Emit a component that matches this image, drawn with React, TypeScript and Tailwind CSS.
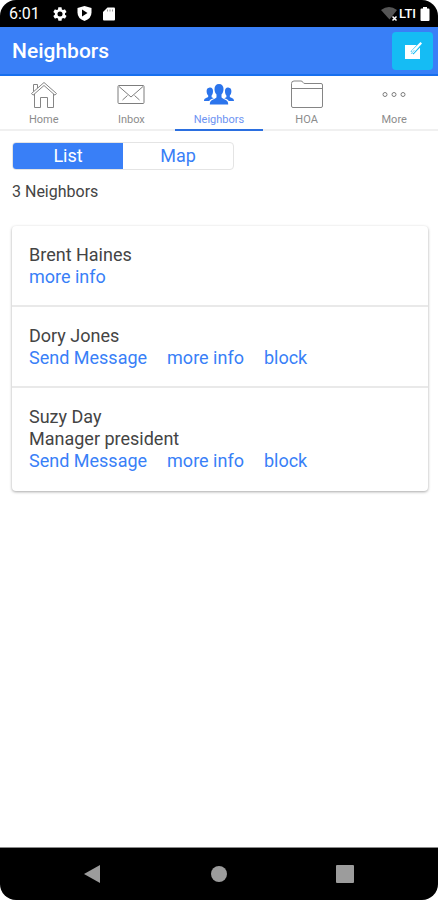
import type { ReactNode } from "react";
import clsx from "clsx";

const tabs = [
  { label: "Home", icon: <HomeIcon /> },
  { label: "Inbox", icon: <InboxIcon /> },
  { label: "Neighbors", icon: <PeopleIcon />, active: true },
  { label: "HOA", icon: <FolderIcon /> },
  { label: "More", icon: <MoreIcon /> },
];

const neighbors = [
  { name: "Brent Haines", actions: ["more info"] },
  { name: "Dory Jones", actions: ["Send Message", "more info", "block"] },
  { name: "Suzy Day", role: "Manager president", actions: ["Send Message", "more info", "block"] },
];

function HomeIcon() {
  return (
    <svg width="28" height="30" viewBox="0 0 28 30" fill="none" stroke="#858585" strokeWidth="1">
      <path d="M1.500 13.500 14 2.500l12.500 11-1.500 1.700L14 5.500 3 15.200z" />
      <path d="M3.500 11.500V4.500h4v3.500" />
      <path d="M4.500 14v13.500h6v-10h7v10h6V14" />
    </svg>
  );
}

function InboxIcon() {
  return (
    <svg width="28" height="30" viewBox="0 0 28 30" fill="none" stroke="#7d7d7d" strokeWidth="1">
      <rect x="1" y="5.500" width="26" height="18" rx="1" />
      <path d="M2 6.500 14 17 26 6.500M5.500 20l5-4.500M22.500 20l-5-4.500" />
    </svg>
  );
}

function PeopleIcon() {
  return (
    <svg width="32" height="30" viewBox="0 0 32 30" fill="#2b74ec">
      <path d="M16 4c3 0 4.500 2 4.500 5 0 2.500-.8 4.400-2 5.600v2.600c.6 1.500 5 2 6.200 4.600.4 1 .5 1.800.5 2.700H6.800c0-.9.1-1.700.5-2.700 1.200-2.600 5.600-3.100 6.200-4.600v-2.600c-1.200-1.200-2-3.100-2-5.600 0-3 1.500-5 4.500-5z" />
      <path d="M6.700 7.500c2-.3 3.300 1.100 3.300 3.500 0 2-.5 3.600-1.400 4.500v1.700l2.200 1.100c-2 .6-3.700 1.300-4.600 2.700H1c0-3.300 3.400-2.700 4.200-4.200v-1.300C4.200 14.700 3.600 13 3.600 11c0-2 1-3.200 3.100-3.500z" />
      <path d="M25.300 7.500c-2-.3-3.300 1.100-3.300 3.500 0 2 .5 3.600 1.400 4.500v1.700l-2.200 1.100c2 .6 3.700 1.300 4.600 2.700H31c0-3.300-3.400-2.700-4.200-4.200v-1.300c1-.8 1.600-2.500 1.600-4.500 0-2-1-3.200-3.100-3.500z" />
    </svg>
  );
}

function FolderIcon() {
  return (
    <svg width="34" height="30" viewBox="0 0 34 30" fill="none" stroke="#858585" strokeWidth="1">
      <path d="M1.500 26V3.500q0-2.500 2.500-2.500h7q1.500 0 2 1.500.5 1 2 1h16q1.500 0 1.500 1.500v21q0 1.500-1.500 1.500H3q-1.500 0-1.500-1.500z" />
      <path d="M1.500 8.500h31" />
    </svg>
  );
}

function MoreIcon() {
  return (
    <svg width="26" height="30" viewBox="0 0 26 30" fill="none" stroke="#7d7d7d" strokeWidth="1">
      <circle cx="4" cy="14.500" r="2" />
      <circle cx="13" cy="14.500" r="2" />
      <circle cx="22" cy="14.500" r="2" />
    </svg>
  );
}

function StatusBar() {
  return (
    <div className="flex h-[27px] items-center rounded-t-2xl bg-black pr-2 pl-[9px] text-white">
      <span className="w-[43px] text-base leading-5">6:01</span>
      <div className="flex items-center gap-2">
        {/* settings */}
        <svg width="16" height="16" viewBox="0 0 24 24" fill="#fff">
          <path d="M19.400 13c.1-.3.100-.7.100-1s0-.7-.1-1l2.100-1.600c.2-.2.200-.4.100-.6l-2-3.500c-.1-.2-.4-.3-.6-.2l-2.500 1c-.5-.4-1.100-.7-1.700-1l-.4-2.600c0-.3-.2-.5-.5-.5h-4c-.2 0-.4.200-.5.400L9 5.100c-.6.200-1.200.6-1.700 1l-2.500-1c-.2-.1-.5 0-.6.200l-2 3.400c-.1.200-.1.500.1.700L4.400 11c0 .3-.1.700-.1 1s0 .7.100 1l-2.100 1.600c-.2.200-.2.400-.1.600l2 3.500c.1.200.4.300.6.200l2.500-1c.5.400 1.100.7 1.700 1l.4 2.600c0 .3.200.5.500.5h4c.2 0 .5-.2.500-.4l.4-2.700c.6-.2 1.200-.6 1.700-1l2.500 1c.2.100.5 0 .6-.2l2-3.400c.1-.2.100-.5-.1-.7zM12 15.800a3.800 3.800 0 1 1 0-7.600 3.800 3.800 0 0 1 0 7.600z" fillRule="evenodd" />
        </svg>
        {/* play protect */}
        <svg width="17" height="17" viewBox="0 0 17 17">
          <path d="M8.500 1 15.500 3v4.500q0 6-7 8.500-7-2.500-7-8.500V3z" fill="#fff" />
          <path d="M6 4.500v7l5.500-3.500z" fill="#000" />
        </svg>
        {/* sd card */}
        <svg width="16" height="16" viewBox="0 0 16 16">
          <path d="M6.500 1.500H13q1 0 1 1v11q0 1-1 1H3q-1 0-1-1V6z" fill="#fff" />
          <path d="M6.500 3.500v2M9 3.500v2M11.500 3.500v2" stroke="#999" />
        </svg>
      </div>
      <div className="ml-auto flex items-center">
        <svg width="18" height="16" viewBox="0 0 18 16">
          <path d="M0 4q8-6 16 0L8.500 13.500z" fill="#555" />
          <path d="M11.500 10.500l4 4M15.500 10.500l-4 4" stroke="#fff" strokeWidth="1.500" />
        </svg>
        <span className="mr-1 text-[13px] leading-5 font-medium">LTI</span>
        <svg width="10" height="16" viewBox="0 0 10 16" fill="#fff">
          <path d="M3 1h4v1.500h1.500q1 0 1 1v10.500q0 1-1 1h-7q-1 0-1-1V3.500q0-1 1-1H3z" />
        </svg>
      </div>
    </div>
  );
}

function Header() {
  return (
    <header className="flex h-[49px] items-center justify-between border-b-2 border-[#176fee] bg-[#397ff7] pr-[5px] pl-3">
      <h1 className="text-[21px] leading-6 font-medium text-white">Neighbors</h1>
      <button
        type="button"
        aria-label="New message"
        className="flex h-[38px] w-[41px] items-center justify-center rounded bg-[#15bcf4]"
      >
        <svg width="20" height="20" viewBox="0 0 20 20">
          <path d="M2 4h15v14H2z" fill="#fff" />
          <path d="M9 12 18 2.500" stroke="#15bcf4" strokeWidth="4" />
          <path d="M7.500 13.500 9 9.500 17.500 1 19 2.500l-8 9z" fill="#fff" />
          <path d="M8 13l3.500-4" stroke="#7fd6f5" />
        </svg>
      </button>
    </header>
  );
}

function TabBar() {
  return (
    <nav className="flex h-[55px]">
      {tabs.map((tab) => (
        <a
          key={tab.label}
          href="#"
          className={clsx(
            "flex flex-1 flex-col items-center gap-px border-b-2 pt-1 text-[11px] leading-[18px]",
            tab.active ? "border-[#2b6fe0] text-[#6d93f2]" : "border-[#f0f0f0] text-[#8c8c8c]"
          )}
        >
          {tab.icon}
          <span>{tab.label}</span>
        </a>
      ))}
    </nav>
  );
}

function NeighborRow({ name, role, actions }: { name: string; role?: string; actions: string[] }) {
  return (
    <li className="border-b-2 border-[#e9e9e9] px-[17px] pt-[18px] pb-[17px] last:border-transparent">
      <p>{name}</p>
      {role && <p>{role}</p>}
      <div className="flex gap-5 text-[#397ff7]">
        {actions.map((action) => (
          <a key={action} href="#">
            {action}
          </a>
        ))}
      </div>
    </li>
  );
}

function NavButton({ label, children }: { label: string; children: ReactNode }) {
  return (
    <button type="button" aria-label={label} className="flex h-10 w-10 items-center justify-center">
      <svg width="18" height="18" viewBox="0 0 18 18" fill="#9c9c9c">
        {children}
      </svg>
    </button>
  );
}

export default function App() {
  return (
    <div className="flex min-h-screen flex-col bg-white font-[Roboto,sans-serif] text-[#444]">
      <StatusBar />
      <Header />
      <TabBar />

      <main className="flex-1 pt-[11px] pr-[10px] pl-3">
        <div className="flex h-7 w-[222px] overflow-hidden rounded border border-[#e4e4e4] text-lg leading-6">
          <button type="button" aria-pressed="true" className="flex-1 bg-[#397ff7] text-white">
            List
          </button>
          <button type="button" aria-pressed="false" className="flex-1 text-[#397ff7]">
            Map
          </button>
        </div>
        <p className="mt-3 text-base leading-5">3 Neighbors</p>

        <ul className="mt-6 rounded-sm text-lg leading-[22px] shadow-[0_1px_3px_rgba(0,0,0,0.35)]">
          {neighbors.map((n) => (
            <NeighborRow key={n.name} {...n} />
          ))}
        </ul>
      </main>

      {/* Android navigation */}
      <footer className="flex h-[53px] items-center justify-around rounded-b-2xl border-t border-[#8a8a8a] bg-black px-[30px]">
        <NavButton label="Back">
          <path d="M16 0v18L0 9z" />
        </NavButton>
        <NavButton label="Home">
          <circle cx="9" cy="9" r="8" />
        </NavButton>
        <NavButton label="Recent apps">
          <rect width="18" height="18" rx="1" />
        </NavButton>
      </footer>
    </div>
  );
}
